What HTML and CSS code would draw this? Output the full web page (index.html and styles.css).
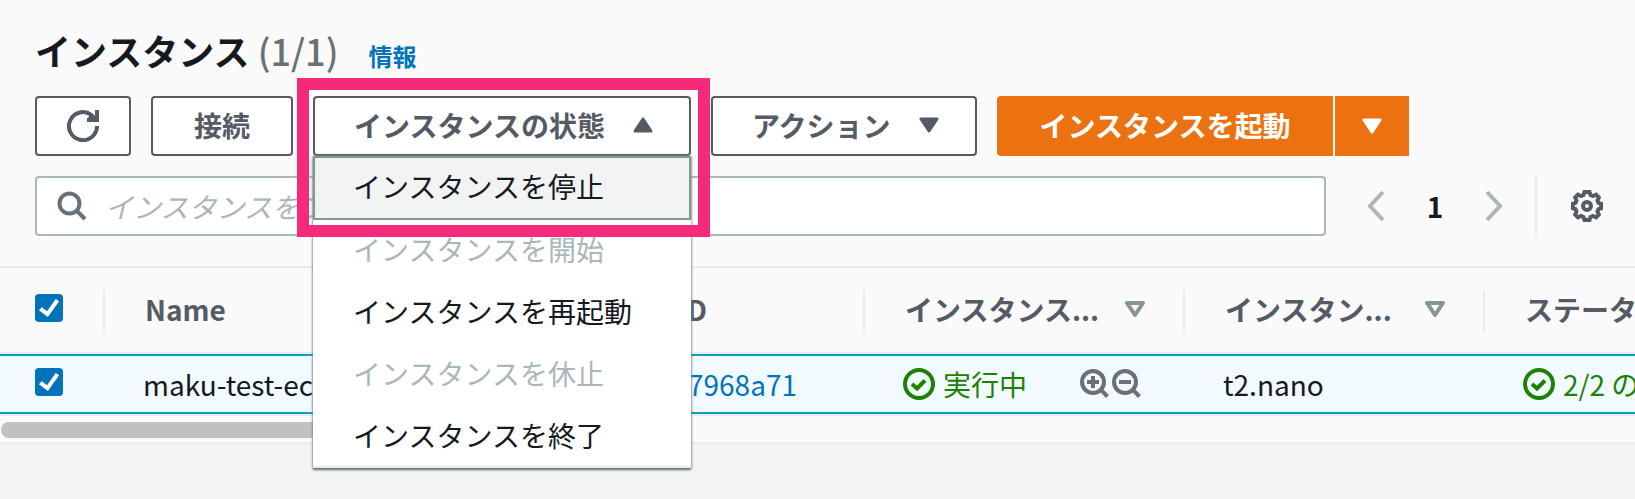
FILE: index.html
```html
<!DOCTYPE html>
<html lang="ja">
<head>
<meta charset="utf-8">
<title>インスタンス</title>
<link rel="stylesheet" href="styles.css">
</head>
<body>
<main class="panel">
  <header class="title">
    <h1>インスタンス <span class="count">(1/1)</span></h1>
    <a class="info" href="#info">情報</a>
  </header>

  <div class="actions">
    <button class="btn btn-icon" type="button" aria-label="更新">
      <svg class="icon" viewBox="0 0 32 32"><path d="M30 16A14 14 0 1 1 24.500 5L28 9" /><path d="M30 0v10H20" /><path d="M22 6 28 9" /></svg>
    </button>
    <button class="btn" type="button">接続</button>
    <div class="dropdown">
      <button class="btn btn-menu" type="button" aria-expanded="true">インスタンスの状態
        <svg class="caret" viewBox="0 0 20 16"><path d="M10 2 18 14H2Z" /></svg>
      </button>
      <div class="menu" role="menu">
        <button class="item active" type="button" role="menuitem">インスタンスを停止</button>
        <button class="item" type="button" role="menuitem" disabled>インスタンスを開始</button>
        <button class="item" type="button" role="menuitem">インスタンスを再起動</button>
        <button class="item" type="button" role="menuitem" disabled>インスタンスを休止</button>
        <button class="item" type="button" role="menuitem">インスタンスを終了</button>
      </div>
      <div class="highlight"></div>
    </div>
    <button class="btn btn-menu" type="button">アクション
      <svg class="caret" viewBox="0 0 20 16"><path d="M2 2H18L10 14Z" /></svg>
    </button>
    <div class="split">
      <button class="launch" type="button">インスタンスを起動</button>
      <button class="launch launch-more" type="button" aria-label="その他">
        <svg class="caret" viewBox="0 0 20 16"><path d="M2 2H18L10 14Z" /></svg>
      </button>
    </div>
  </div>

  <div class="tools">
    <label class="search">
      <svg class="icon search-icon" viewBox="0 0 30 30"><circle cx="12.500" cy="12.500" r="10" /><path d="M19.500 19.500 28 28" /></svg>
      <input type="text" placeholder="インスタンスをフ" aria-label="インスタンスを検索">
    </label>
    <nav class="pager">
      <button class="plain" type="button" aria-label="前へ"><svg class="chevron" viewBox="0 0 18 32"><path d="M16 2 3 16 16 30" /></svg></button>
      <span class="page">1</span>
      <button class="plain" type="button" aria-label="次へ"><svg class="chevron" viewBox="0 0 18 32"><path d="M2 2 15 16 2 30" /></svg></button>
    </nav>
    <div class="settings">
      <button class="plain" type="button" aria-label="設定">
        <svg class="icon gear" viewBox="0 0 32 32"><path d="M13.500 2h5l1 3 2.500 1 3-1.300 2.800 2.800L26.500 10.500l1 2.300 2.500.9v4.600l-2.500.9-1 2.300 1.300 3-2.800 2.800-3-1.300-2.500 1-1 3h-5l-1-3-2.500-1-3 1.300-2.800-2.800 1.300-3-1-2.300-2.500-.9v-4.600l2.500-.9 1-2.300-1.300-3L7 4.700 10 6l2.500-1Z" /><circle cx="16" cy="16" r="4" /></svg>
      </button>
    </div>
  </div>

  <div class="scroller">
    <table>
      <colgroup><col class="c-check"><col class="c-name"><col class="c-id"><col class="c-state"><col class="c-type"><col class="c-status"></colgroup>
      <thead>
        <tr>
          <th><input type="checkbox" aria-label="すべて選択" checked></th>
          <th><div class="head">Name</div></th>
          <th><div class="head head-id">インスタンス ID</div></th>
          <th><div class="head">インスタンス...<svg class="sort" viewBox="0 0 20 16"><path d="M2 2H18L10 14Z" /></svg></div></th>
          <th><div class="head">インスタン...<svg class="sort" viewBox="0 0 20 16"><path d="M2 2H18L10 14Z" /></svg></div></th>
          <th><div class="head">ステータ</div></th>
        </tr>
      </thead>
      <tbody>
        <tr>
          <td><input type="checkbox" aria-label="maku-test-ec2 を選択" checked></td>
          <td>maku-test-ec2</td>
          <td class="id"><a href="#instance">7968a71</a></td>
          <td>
            <div class="state">
              <svg class="ok" viewBox="0 0 32 32"><circle cx="16" cy="16" r="14" /><path d="m9 16 5 4.500 8-8" /></svg>
              <span>実行中</span>
              <span class="zooms">
                <button class="plain" type="button" aria-label="フィルターに追加"><svg class="mag" viewBox="0 0 30 30"><circle cx="13" cy="13" r="11" /><path d="m20.500 20.500 7 7M7 13h12M13 7v12" /></svg></button>
                <button class="plain" type="button" aria-label="フィルターから除外"><svg class="mag" viewBox="0 0 30 30"><circle cx="13" cy="13" r="11" /><path d="m20.500 20.500 7 7M7 13h12" /></svg></button>
              </span>
            </div>
          </td>
          <td>t2.nano</td>
          <td>
            <div class="state">
              <svg class="ok" viewBox="0 0 32 32"><circle cx="16" cy="16" r="14" /><path d="m9 16 5 4.500 8-8" /></svg>
              <span>2/2 の</span>
            </div>
          </td>
        </tr>
      </tbody>
    </table>
    <div class="track"><div class="thumb"></div></div>
  </div>
</main>
</body>
</html>
```
FILE: styles.css
```css
* { box-sizing: border-box; }

body {
  min-height: 100vh;
  margin: 0;
  overflow-x: hidden;
  background: #f2f3f3;
  color: #16191f;
  font: 28px/36px "Noto Sans CJK JP", "Noto Sans", sans-serif;
}

button, input { font: inherit; color: inherit; }
button { margin: 0; padding: 0; white-space: nowrap; }
a { color: #0073bb; text-decoration: none; }
svg { display: block; flex: none; fill: none; stroke: currentColor; }

.panel { background: #fafafa; border-bottom: 2px solid #eaeded; }

.title { display: flex; align-items: baseline; gap: 30px; padding: 26px 35px 22px; }
.title h1 { margin: 0; font-size: 36px; line-height: 48px; font-weight: 700; }
.count { color: #687078; font-weight: 500; }
.info { font-size: 24px; line-height: 36px; font-weight: 700; }

.actions { display: flex; gap: 20px; padding: 0 35px; }
.btn {
  display: flex;
  align-items: center;
  justify-content: center;
  height: 60px;
  padding: 0 41px 2px;
  border: 2px solid #545b64;
  border-radius: 4px;
  background: #fff;
  color: #545b64;
  font-weight: 700;
}
.btn-icon { padding: 0 30px; }
.icon { width: 32px; height: 32px; stroke-width: 4; }
.btn-menu { gap: 28px; padding: 0 36px 2px 39px; }
.caret { width: 20px; height: 16px; fill: currentColor; stroke-width: 3; stroke-linejoin: round; }

.dropdown { position: relative; }
.menu {
  position: absolute;
  z-index: 2;
  top: 100%;
  left: 0;
  right: 0;
  background: #fff;
  box-shadow: inset 0 -2px #eaeded, 0 2px 2px #687078, 0 0 3px #879596;
}
.item {
  display: block;
  width: 100%;
  height: 62px;
  padding: 0 38px 4px;
  border: 2px solid transparent;
  background: none;
  text-align: left;
}
.item:disabled { color: #aab7b8; }
.item.active { height: 64px; border-color: #879596; background: #f2f3f3; }
.highlight {
  position: absolute;
  z-index: 3;
  top: -18px;
  left: -16px;
  right: -19px;
  height: 159px;
  border: 12px solid #f62a7a;
  pointer-events: none;
}

.split { display: flex; gap: 2px; background: #fff; }
.launch {
  height: 60px;
  padding: 0 43px 2px;
  border: 0;
  border-radius: 4px 0 0 4px;
  background: #ec7211;
  color: #fff;
  font-weight: 700;
}
.launch-more { padding: 0 27px; border-radius: 0; }

.tools { display: flex; padding: 20px 32px 30px 35px; }
.search {
  display: flex;
  flex: 1;
  align-items: center;
  gap: 18px;
  height: 60px;
  padding: 0 20px;
  border: 2px solid #aab7b8;
  border-radius: 4px;
  background: #fff;
}
.search-icon { width: 30px; height: 30px; color: #687078; }
.search input { flex: 1; min-width: 0; padding: 0; border: 0; outline: 0; background: none; }
.search input::placeholder { color: #aab7b8; font-style: italic; opacity: 1; }
.pager { display: flex; align-items: center; gap: 40px; padding: 0 32px 0 41px; }
.page { width: 20px; font-weight: 700; text-align: center; }
.plain { display: block; border: 0; background: none; }
.chevron { width: 18px; height: 32px; color: #aab7b8; stroke-width: 4; }
.settings { display: flex; align-items: center; padding-left: 34px; border-left: 2px solid #eaeded; }
.gear { color: #545b64; }

.scroller { overflow: hidden; border-top: 2px solid #eaeded; }
table { width: 1785px; border-collapse: separate; border-spacing: 0; table-layout: fixed; }
.c-check { width: 105px; }
.c-name { width: 340px; }
.c-id { width: 420px; }
.c-state { width: 320px; }
.c-type { width: 300px; }
.c-status { width: 300px; }
th { height: 86px; padding: 0; border-bottom: 2px solid #eaeded; color: #545b64; text-align: left; font-weight: 700; }
th:first-child, td:first-child { padding: 0 0 0 35px; }
.head { display: flex; align-items: center; justify-content: space-between; height: 42px; padding: 0 40px 2px; }
.head-id { justify-content: flex-end; padding-right: 158px; }
th:not(:last-child) { background: linear-gradient(#eaeded, #eaeded) right 0 top 22px / 2px 42px no-repeat; }
.sort { width: 20px; height: 16px; color: #879596; stroke-width: 4; stroke-linejoin: round; }
td { height: 60px; padding: 0 38px; border: solid #00a1c9; border-width: 2px 0; background: #f1faff; white-space: nowrap; }
td.id { padding-right: 68px; text-align: right; }
input[type="checkbox"] {
  display: grid;
  width: 28px;
  height: 28px;
  margin: 0 0 4px;
  border-radius: 4px;
  background: #0073bb;
  appearance: none;
}
input[type="checkbox"]::before {
  content: "";
  background: #fff;
  clip-path: polygon(14% 58%, 24% 47%, 43% 62%, 74% 18%, 86% 26%, 46% 82%);
}
.state { display: flex; align-items: center; gap: 8px; color: #1d8102; }
.ok { width: 32px; height: 32px; stroke-width: 4; }
.zooms { display: flex; gap: 2px; margin-left: auto; padding-right: 5px; color: #687078; }
.mag { width: 30px; height: 30px; stroke-width: 4; }
.track { padding: 6px 0 4px 1px; border-top: 2px solid #eaeded; }
.thumb { width: 40%; height: 16px; border-radius: 8px; background: #c1c1c1; }
```
